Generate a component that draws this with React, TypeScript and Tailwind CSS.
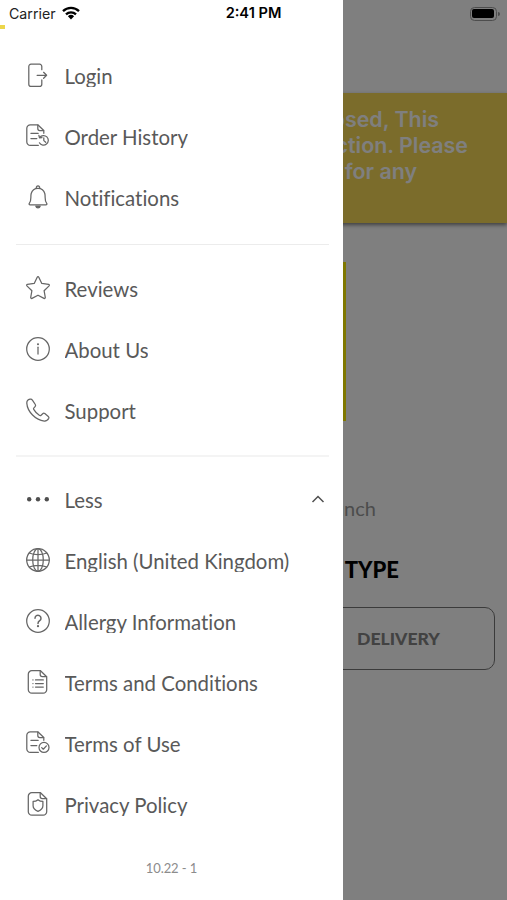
import type { ReactNode } from 'react'

type Item = {
  label: string
  icon: ReactNode
  expanded?: boolean
}

const page = 'M5.8 0.7h8.700l6.200 6v13a3.500 3.500 0 0 1-3.500 3.500H5.800a3.500 3.500 0 0 1-3.500-3.500V4.200a3.500 3.500 0 0 1 3.500-3.500z'
const fold = 'M14.200 .900v3.700a2 2 0 0 0 2 2h4.300'

function Icon({ children }: { children: ReactNode }) {
  return (
    <svg
      viewBox="0 0 24 24"
      className="h-6 w-6 shrink-0 overflow-visible"
      fill="none"
      stroke="#666"
      strokeWidth="1.25"
      strokeLinecap="round"
      strokeLinejoin="round"
    >
      {children}
    </svg>
  )
}

// page with an open corner, shared by the two icons that carry a round badge
function BadgePage() {
  return (
    <>
      <path d="M12.300 21.400H4.300a3.500 3.500 0 0 1-3.500-3.500V4.300A3.500 3.500 0 0 1 4.300.8h7.500l6 5.700v2.800" />
      <path d="M11.800 1v3.500a2 2 0 0 0 2 2h3.800M4.900 9.300h7.300M4.900 14.600h5.900" />
    </>
  )
}

const account: Item[] = [
  {
    label: 'Login',
    icon: (
      <Icon>
        <path d="M15.800 6.700V3.400a2.200 2.200 0 0 0-2.200-2.200H5a2.200 2.200 0 0 0-2.200 2.200v17.800A2.200 2.200 0 0 0 5 23.400h8.600a2.200 2.200 0 0 0 2.200-2.200v-4.300" />
        <path d="M11.100 12.300h9.400M17.600 9.300l3 3-3 3" />
      </Icon>
    ),
  },
  {
    label: 'Order History',
    icon: (
      <Icon>
        <BadgePage />
        <path d="M13.700 13.400a4.800 4.800 0 1 1-.300 5.400M12.900 11.400l.600 2.500 2.500-.300M17.800 13.800v2.800l1.900 1.700" />
      </Icon>
    ),
  },
  {
    label: 'Notifications',
    icon: (
      <Icon>
        <path d="M3.300 18.400C5.800 15.500 4.300 12 5.200 8.500c.800-3.100 3.300-5.200 6.800-5.200s6 2.100 6.800 5.200c.900 3.500-.600 7 1.900 9.900.500.700.100 1.500-.800 1.500H4.100c-.900 0-1.300-.800-.800-1.500z" />
        <path d="M10.300 3.400c-.200-1.500.500-2.600 1.700-2.600s1.900 1.100 1.700 2.600" />
        <path d="M9.800 21h4.400c-.300 1.200-1.100 1.900-2.200 1.900s-1.900-.7-2.200-1.900z" fill="#666" />
      </Icon>
    ),
  },
]

const about: Item[] = [
  {
    label: 'Reviews',
    icon: (
      <Icon>
        <path d="M11.200 1.200a.9.900 0 0 1 1.600 0l3 6.200 6.800 1a.9.900 0 0 1 .500 1.500l-5 4.800 1.200 6.800a.9.900 0 0 1-1.300.9L12 19.200l-6 3.200a.9.900 0 0 1-1.300-.9l1.200-6.800-5-4.800a.9.900 0 0 1 .500-1.500l6.800-1z" />
      </Icon>
    ),
  },
  {
    label: 'About Us',
    icon: (
      <Icon>
        <circle cx="12" cy="12" r="11.300" />
        <path d="M12 10.200v6.800" />
        <circle cx="12" cy="7.200" r=".45" fill="#666" />
      </Icon>
    ),
  },
  {
    label: 'Support',
    icon: (
      <Icon>
        <path d="M4 1.200C2 1.600.800 3.300.800 5.100c.600 8.700 8.900 17.100 17.500 18 2 .1 3.600-1 4.500-2.800.3-.7.1-1.400-.5-1.900l-3.500-2.800a1.600 1.600 0 0 0-2.100.1l-1.600 1.500c-.5.500-1.200.500-1.800.1a18 18 0 0 1-5.600-5.900c-.3-.5-.2-1.100.2-1.500l1.200-1.300c.6-.6.6-1.400.2-2.100L6.400 2.200C5.900 1.300 5 1 4 1.200z" />
      </Icon>
    ),
  },
]

const more: Item[] = [
  {
    label: 'Less',
    expanded: true,
    icon: (
      <Icon>
        <g fill="#4f4f4f" stroke="none">
          <circle cx="3.200" cy="12.300" r="2.200" />
          <circle cx="12" cy="12.300" r="2.200" />
          <circle cx="20.800" cy="12.300" r="2.200" />
        </g>
      </Icon>
    ),
  },
  {
    label: 'English (United Kingdom)',
    icon: (
      <Icon>
        <circle cx="12" cy="12" r="11.300" />
        <ellipse cx="12" cy="12" rx="5.300" ry="11.300" />
        <path d="M.700 12h22.600M12 .700v22.600M3.300 5c5 2.300 12.400 2.300 17.400 0M3.300 19c5-2.300 12.400-2.300 17.400 0" />
      </Icon>
    ),
  },
  {
    label: 'Allergy Information',
    icon: (
      <Icon>
        <circle cx="12" cy="12" r="11.300" />
        <path d="M9 9.300a3 3 0 1 1 4.700 2.400c-1.100.8-1.700 1.300-1.700 2.700" strokeWidth="1.500" />
        <circle cx="12" cy="17.200" r=".5" fill="#666" />
      </Icon>
    ),
  },
  {
    label: 'Terms and Conditions',
    icon: (
      <Icon>
        <path d={page} />
        <path d={fold} />
        <path d="M9.500 9.900h7.800M9.500 13.500h7.800M9.500 17.100h7.800M6.900 9.900h.1M6.900 13.500h.1M6.900 17.100h.1" />
      </Icon>
    ),
  },
  {
    label: 'Terms of Use',
    icon: (
      <Icon>
        <BadgePage />
        <circle cx="18" cy="16.400" r="5" />
        <path d="M15.700 16.600l1.600 1.600 3.100-3.300" />
      </Icon>
    ),
  },
  {
    label: 'Privacy Policy',
    icon: (
      <Icon>
        <path d={page} />
        <path d={fold} />
        <path d="M12 7.700c1.400 1.200 3 1.700 4.900 1.700v4.300c0 2.700-1.900 4.400-4.900 5.600-3-1.200-4.900-2.900-4.900-5.600V9.400c1.900 0 3.500-.5 4.900-1.700z" />
      </Icon>
    ),
  },
]

function Section({ items }: { items: Item[] }) {
  return (
    <ul>
      {items.map(item => (
        <li key={item.label} className="flex h-[61px] items-center pr-[18px] pl-[25.5px]">
          {item.icon}
          <span className="mt-0.5 ml-[15px] h-[23px] overflow-hidden text-[20.4px] leading-[25.5px] whitespace-nowrap text-[#595959] [font-variant-ligatures:none]">
            {item.label}
          </span>
          {item.expanded && (
            <svg viewBox="0 0 14 8" className="ml-auto h-2 w-3.5" fill="none" stroke="#505050" strokeWidth="1.5">
              <path d="M1.500 7L7 1.500 12.500 7" />
            </svg>
          )}
        </li>
      ))}
    </ul>
  )
}

function StatusBar() {
  return (
    <header className="absolute inset-x-0 top-0 flex h-[27px] items-center justify-between pr-[7px] pl-[9px] font-['Inter',sans-serif] text-black">
      <div className="flex w-[209px] items-center gap-1.5">
        <span className="text-[14.2px] text-[#222]">Carrier</span>
        <svg viewBox="0 0 18 14" className="h-[14px] w-[18px]" fill="none" stroke="#000" strokeWidth="2.300">
          <path d="M1 5.100a11.500 11.500 0 0 1 16 0M4 8.300a7.200 7.200 0 0 1 10 0" />
          <path d="M5.900 10.300a4.500 4.500 0 0 1 6.200 0L9 13.500z" fill="#000" stroke="none" />
        </svg>
      </div>
      <span className="pt-px text-[14.600px] font-semibold">2:41 PM</span>
      <div className="flex w-[211px] items-center justify-end gap-px">
        <div className="h-[14px] w-[27px] rounded-[4.500px] border border-[#4d4d4d] p-[1.500px]">
          <div className="h-full rounded-[2px] bg-black" />
        </div>
        <div className="h-1 w-[2px] rounded-r-full bg-[#4d4d4d]" />
      </div>
    </header>
  )
}

export default function App() {
  return (
    <div className="relative h-[900px] w-[507px] overflow-hidden bg-white font-['Lato',sans-serif]">
      {/* Home screen */}
      <main className="pt-[93px]">
        <div className="flex h-[130px] flex-col items-end bg-[#f6d856] pt-[13px] font-['Inter',sans-serif] text-[21.400px] leading-[26px] font-semibold whitespace-nowrap text-white shadow-[0_2px_4px_rgba(0,0,0,0.5)]">
          <p className="pr-[68px]">closed, This</p>
          <p className="pr-[39px]">transaction. Please</p>
          <p className="pr-[90px]">for any</p>
        </div>
        <div className="mx-auto mt-[39px] h-[159px] w-[185px] bg-[#fff000]" />
        <p className="mt-[75px] pr-[131px] text-right text-[20px] leading-6 text-[#999]">Lunch</p>
        <h2 className="mt-[36px] pr-[108px] text-right text-[22px] leading-7 font-black text-black">TYPE</h2>
        <div className="mt-[23px] mr-3 ml-auto flex h-[63px] w-[193px] items-center justify-center rounded-[10px] border border-[#777] pt-0.5 text-[17.600px] font-black text-[#858585]">
          DELIVERY
        </div>
      </main>

      <div className="absolute inset-0 bg-black/50" />

      {/* Drawer */}
      <aside className="absolute inset-y-0 left-0 w-[343px] bg-white pt-[25px]">
        <div className="mb-[15px] h-1 w-[5px] bg-[#ecd64b]" />
        <nav>
          <Section items={account} />
          <hr className="mt-[17px] mr-3.5 mb-3 ml-4 border-[#ececec]" />
          <Section items={about} />
          <hr className="mt-[15px] mr-3.5 mb-[11px] ml-4 border-t-2 border-[#f4f4f4]" />
          <Section items={more} />
        </nav>
        <p className="mt-6 text-center text-[13px] leading-5 tracking-[-0.1px] text-[#8c8c8c]">10.22 - 1</p>
      </aside>

      <StatusBar />
    </div>
  )
}
